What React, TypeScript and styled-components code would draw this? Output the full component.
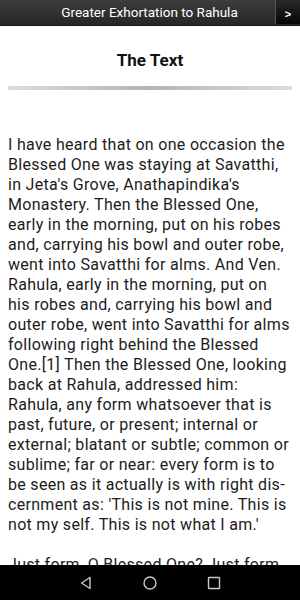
import React from "react";
import styled, { createGlobalStyle } from "styled-components";

const GlobalStyle = createGlobalStyle`
  html, body {
    margin: 0;
    padding: 0;
    background: #ffffff;
  }
  body {
    font-family: Roboto, "Noto Sans", "Liberation Sans", sans-serif;
  }
`;

const Screen = styled.div`
  width: 300px;
  height: 600px;
  display: flex;
  flex-direction: column;
  overflow: hidden;
  background: #ffffff;
`;

const TitleBar = styled.header`
  height: 26px;
  flex: none;
  display: flex;
  align-items: flex-start;
  background: linear-gradient(to bottom, #3c3c3c, #262626);
  border-bottom: 1px solid #1a1a1a;
  box-sizing: border-box;
`;

const BarTitle = styled.div`
  flex: 1;
  height: 24px;
  line-height: 24px;
  text-align: center;
  color: #ffffff;
  font-size: 13.5px;
  padding-left: 24px;
  white-space: nowrap;
`;

const NextButton = styled.button`
  width: 25px;
  height: 24px;
  border: none;
  border-left: 1px solid #555;
  padding: 0;
  margin: 0;
  background: linear-gradient(to bottom, #2a2a2a, #050505);
  color: #ffffff;
  font-family: "Liberation Sans", sans-serif;
  font-weight: bold;
  font-size: 11px;
  line-height: 24px;
  padding-top: 2px;
`;

const Content = styled.main`
  flex: 1;
  overflow: hidden;
  padding: 0 8px;
`;

const Heading = styled.h1`
  margin: 0;
  padding-top: 23px;
  height: 22px;
  line-height: 22px;
  font-size: 17px;
  font-weight: bold;
  text-align: center;
  color: #111;
`;

const Rule = styled.div`
  margin-top: 15px;
  height: 4px;
  background: linear-gradient(to right, #dcdcdc, #b4b4b4 50%, #dcdcdc);
`;

const Passage = styled.p<{ $top: number }>`
  margin: ${({ $top }) => $top}px 0 0;
  font-size: 16px;
  letter-spacing: 0.3px;
  line-height: 20px;
  color: #1c1c1c;
  white-space: nowrap;
`;

const NavBar = styled.nav`
  height: 35px;
  flex: none;
  background: #000;
  display: flex;
  align-items: center;
  justify-content: center;
  gap: 48px;
`;

const NavIcon = styled.svg`
  width: 16px;
  height: 16px;
  display: block;
`;

const first = [
  "I have heard that on one occasion the",
  "Blessed One was staying at Savatthi,",
  "in Jeta's Grove, Anathapindika's",
  "Monastery. Then the Blessed One,",
  "early in the morning, put on his robes",
  "and, carrying his bowl and outer robe,",
  "went into Savatthi for alms. And Ven.",
  "Rahula, early in the morning, put on",
  "his robes and, carrying his bowl and",
  "outer robe, went into Savatthi for alms",
  "following right behind the Blessed",
  "One.[1] Then the Blessed One, looking",
  "back at Rahula, addressed him:",
  "Rahula, any form whatsoever that is",
  "past, future, or present; internal or",
  "external; blatant or subtle; common or",
  "sublime; far or near: every form is to",
  "be seen as it actually is with right dis-",
  "cernment as: 'This is not mine. This is",
  "not my self. This is not what I am.'",
];

const second = ["Just form, O Blessed One? Just form,"];

const Lines: React.FC<{ lines: string[] }> = ({ lines }) => (
  <>
    {lines.map((l, i) => (
      <React.Fragment key={i}>
        {l}
        {i < lines.length - 1 && <br />}
      </React.Fragment>
    ))}
  </>
);

export default function App() {
  return (
    <Screen>
      <GlobalStyle />
      <TitleBar>
        <BarTitle>Greater Exhortation to Rahula</BarTitle>
        <NextButton>&gt;</NextButton>
      </TitleBar>
      <Content>
        <Heading>The Text</Heading>
        <Rule />
        <Passage $top={45}>
          <Lines lines={first} />
        </Passage>
        <Passage $top={20}>
          <Lines lines={second} />
        </Passage>
      </Content>
      <NavBar>
        <NavIcon viewBox="0 0 16 16">
          <path d="M12 2.5 L3.5 8 L12 13.5 Z" fill="none" stroke="#c8c8c8" strokeWidth="1.4" strokeLinejoin="round" />
        </NavIcon>
        <NavIcon viewBox="0 0 16 16">
          <circle cx="8" cy="8" r="6" fill="none" stroke="#c8c8c8" strokeWidth="1.4" />
        </NavIcon>
        <NavIcon viewBox="0 0 16 16">
          <rect x="2.5" y="2.5" width="11" height="11" rx="0.5" fill="none" stroke="#c8c8c8" strokeWidth="1.4" />
        </NavIcon>
      </NavBar>
    </Screen>
  );
}
